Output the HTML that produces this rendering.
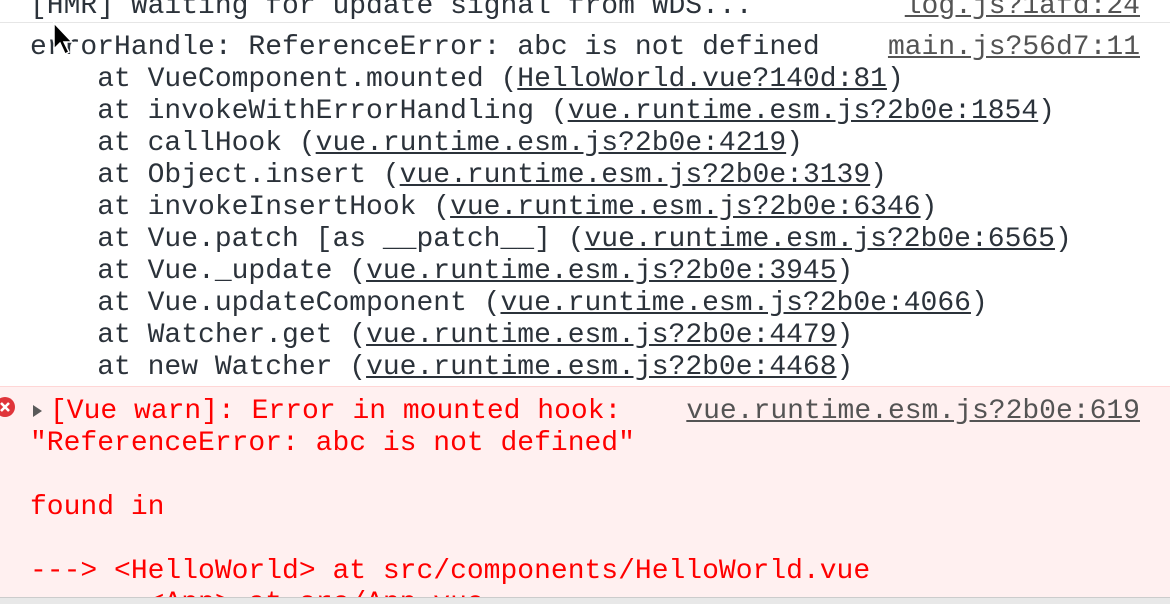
<!DOCTYPE html>
<html><head><meta charset="utf-8"><style>
html,body{margin:0;padding:0;width:1170px;height:604px;overflow:hidden;background:#fff;}
body{position:relative;font-family:"Liberation Mono","DejaVu Sans Mono",monospace;font-size:28px;}
.l{position:absolute;left:30px;height:32px;line-height:32px;white-space:pre;color:#2b323a;}
.r{position:absolute;right:30px;height:32px;line-height:32px;white-space:pre;color:#545454;text-decoration:underline;}
.u{text-decoration:underline;color:#2b323a;}
.red{color:#f00;}
#err{position:absolute;left:0;top:386px;width:1170px;height:212px;background:#fff0f0;border-top:1px solid #ffd6d6;}
#bar{position:absolute;left:0;top:597px;width:1170px;height:7px;background:#e8e8e8;border-top:1px solid #ccc;}
</style></head><body>
<div class="l" style="top:-9px">[HMR] Waiting for update signal from WDS...</div>
<div class="r" style="top:-9px">log.js?1afd:24</div>
<div style="position:absolute;left:0;top:22px;width:1170px;height:1px;background:#e6e6e6"></div>
<div class="l" style="top:32px">errorHandle: ReferenceError: abc is not defined</div>
<div class="r" style="top:32px">main.js?56d7:11</div>
<div class="l" style="top:64px">    at VueComponent.mounted (<span class="u">HelloWorld.vue?140d:81</span>)</div>
<div class="l" style="top:96px">    at invokeWithErrorHandling (<span class="u">vue.runtime.esm.js?2b0e:1854</span>)</div>
<div class="l" style="top:128px">    at callHook (<span class="u">vue.runtime.esm.js?2b0e:4219</span>)</div>
<div class="l" style="top:160px">    at Object.insert (<span class="u">vue.runtime.esm.js?2b0e:3139</span>)</div>
<div class="l" style="top:192px">    at invokeInsertHook (<span class="u">vue.runtime.esm.js?2b0e:6346</span>)</div>
<div class="l" style="top:224px">    at Vue.patch [as __patch__] (<span class="u">vue.runtime.esm.js?2b0e:6565</span>)</div>
<div class="l" style="top:256px">    at Vue._update (<span class="u">vue.runtime.esm.js?2b0e:3945</span>)</div>
<div class="l" style="top:288px">    at Vue.updateComponent (<span class="u">vue.runtime.esm.js?2b0e:4066</span>)</div>
<div class="l" style="top:320px">    at Watcher.get (<span class="u">vue.runtime.esm.js?2b0e:4479</span>)</div>
<div class="l" style="top:352px">    at new Watcher (<span class="u">vue.runtime.esm.js?2b0e:4468</span>)</div>
<div id="err"></div>
<svg style="position:absolute;left:-6px;top:396px" width="22" height="22" viewBox="0 0 22 22"><circle cx="11" cy="11" r="10" fill="#e0343a"/><path d="M7 7L15 15M15 7L7 15" stroke="#fff" stroke-width="2.6"/></svg>
<svg style="position:absolute;left:32px;top:404px" width="12" height="14" viewBox="0 0 12 14"><path d="M1 1L10 7L1 13Z" fill="#5a5a5a"/></svg>
<div class="l red" style="top:396px;left:50px">[Vue warn]: Error in mounted hook:</div>
<div class="r" style="top:396px">vue.runtime.esm.js?2b0e:619</div>
<div class="l red" style="top:428px">"ReferenceError: abc is not defined"</div>
<div class="l red" style="top:492px">found in</div>
<div class="l red" style="top:556px">---&gt; &lt;HelloWorld&gt; at src/components/HelloWorld.vue</div>
<div class="l red" style="top:588px">       &lt;App&gt; at src/App.vue</div>
<div id="bar"></div>
<svg style="position:absolute;left:53px;top:22px" width="22" height="36" viewBox="0 0 22 36"><path d="M1 1L1 27L7 21L12 32L16 30L11 20L19 20Z" fill="#000" stroke="#fff" stroke-width="1.5"/></svg>
</body></html>
